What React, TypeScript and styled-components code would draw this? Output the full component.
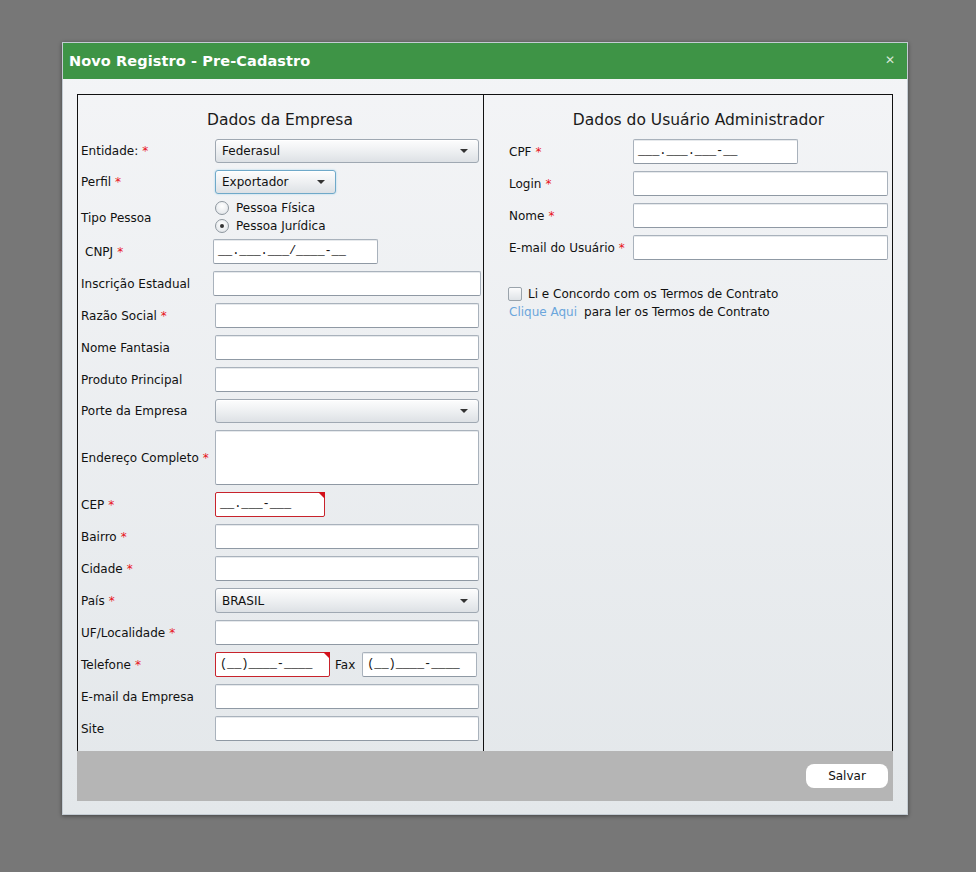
import React from "react";
import styled, { createGlobalStyle, css } from "styled-components";

const Global = createGlobalStyle`
  html, body { margin: 0; padding: 0; }
  body {
    background: #777777;
    font-family: "DejaVu Sans", Verdana, sans-serif;
    font-size: 12px;
    color: #111;
  }
`;

const Page = styled.div`
  width: 976px;
  height: 872px;
  padding: 42px 0 0 62px;
  box-sizing: border-box;
`;

const Dialog = styled.div`
  width: 846px;
  border: 1px solid #c4ccd3;
  box-sizing: border-box;
  box-shadow: 0 1px 4px rgba(0, 0, 0, 0.45);
  background: linear-gradient(#f4f5f7, #e3e7ea);
`;

const Header = styled.div`
  height: 36px;
  background: #3e9446;
  display: flex;
  align-items: center;
  justify-content: space-between;
  padding: 0 12px 0 6px;
`;

const Title = styled.div`
  color: #fff;
  font-weight: bold;
  font-size: 14.5px;
  letter-spacing: 0.1px;
`;

const Close = styled.div`
  color: #d8e6d8;
  font-size: 12px;
  line-height: 1;
  margin-top: -2px;
`;

const Body = styled.div`
  padding: 15px 14px 13px 14px;
`;

const Frame = styled.div`
  border: 1px solid #111;
  border-bottom: none;
  display: grid;
  grid-template-columns: 406px 1fr;
  height: 656px;
`;

const Column = styled.div<{ $divider?: boolean; $pl: number }>`
  padding: 0 4px 0 ${(p) => p.$pl}px;
  ${(p) =>
    p.$divider &&
    css`
      border-right: 1px solid #111;
    `}
`;

const SectionTitle = styled.div`
  font-size: 15.5px;
  text-align: center;
  height: 44px;
  line-height: 50px;
  color: #1a1a1a;
`;

const Rows = styled.div`
  display: flex;
  flex-direction: column;
  gap: 7px;
`;

const Row = styled.div<{ $h?: number; $label: number }>`
  display: grid;
  grid-template-columns: ${(p) => p.$label}px 1fr;
  align-items: center;
  height: ${(p) => p.$h ?? 25}px;
`;

const Label = styled.div<{ $indent?: number }>`
  padding-left: ${(p) => p.$indent ?? 0}px;
  white-space: nowrap;
`;

const Req = styled.span`
  color: #e8121a;
  margin-left: 4px;
`;

const fieldBase = css`
  box-sizing: border-box;
  height: 25px;
  background: #fff;
  border: 1px solid #a9b2bc;
  border-bottom-color: #8f99a4;
  border-radius: 2px;
  box-shadow: inset 0 1px 0 #e6e9ec;
  font-family: inherit;
  font-size: 12px;
  color: #111;
`;

const Input = styled.div<{ $w?: number; $invalid?: boolean }>`
  ${fieldBase}
  width: ${(p) => (p.$w ? `${p.$w}px` : "100%")};
  position: relative;
  display: flex;
  align-items: center;
  padding-left: 4px;
  ${(p) =>
    p.$invalid &&
    css`
      border-color: #c8232c;
      box-shadow: none;
      &::after {
        content: "";
        position: absolute;
        top: -1px;
        right: -1px;
        border-style: solid;
        border-width: 0 7px 7px 0;
        border-color: transparent #d3101a transparent transparent;
      }
    `}
`;

const Mask = styled.span`
  font-family: "Liberation Mono", "DejaVu Sans Mono", monospace;
  font-size: 12px;
  letter-spacing: -0.1px;
  margin-top: -1px;
`;

const TextArea = styled.div`
  ${fieldBase}
  width: 100%;
  height: 55px;
`;

const Select = styled.div<{ $w?: number; $h?: number; $focus?: boolean }>`
  box-sizing: border-box;
  width: ${(p) => (p.$w ? `${p.$w}px` : "100%")};
  height: ${(p) => p.$h ?? 24}px;
  border: 1px solid #9fa8b2;
  border-radius: 3px;
  background: linear-gradient(#fdfdfd 0%, #eef0f2 50%, #dde1e5 100%);
  box-shadow: inset 0 1px 0 #fff;
  display: flex;
  align-items: center;
  justify-content: space-between;
  padding: 0 10px 0 6px;
  font-size: 12px;
  color: #111;
  ${(p) =>
    p.$focus &&
    css`
      border-color: #6fa9c9;
      box-shadow: 0 0 2px #9fd0ea, inset 0 1px 0 #fff;
    `}
`;

const Arrow = styled.span`
  width: 0;
  height: 0;
  border-left: 4px solid transparent;
  border-right: 4px solid transparent;
  border-top: 4px solid #333;
`;

const Radios = styled.div`
  display: flex;
  flex-direction: column;
  margin-top: -2px;
`;

const RadioLine = styled.div`
  display: flex;
  align-items: center;
  gap: 7px;
  height: 18px;
`;

const RadioDot = styled.span<{ $checked?: boolean }>`
  box-sizing: border-box;
  width: 14px;
  height: 14px;
  border-radius: 50%;
  border: 1px solid #8e979f;
  background: radial-gradient(circle at 50% 35%, #ffffff 0%, #e7eaed 70%, #d6dadf 100%);
  display: flex;
  align-items: center;
  justify-content: center;
  &::after {
    content: "";
    width: 4px;
    height: 4px;
    border-radius: 50%;
    background: ${(p) => (p.$checked ? "#333" : "transparent")};
  }
`;

const PhoneGroup = styled.div`
  display: flex;
  align-items: center;
`;

const FaxLabel = styled.span`
  margin: 0 7px 0 5px;
`;

const Agree = styled.div`
  margin-top: 27px;
  margin-left: -1px;
  display: flex;
  flex-direction: column;
  gap: 4px;
`;

const AgreeLine = styled.div`
  display: flex;
  align-items: center;
  gap: 6px;
  height: 14px;
`;

const Check = styled.span`
  box-sizing: border-box;
  width: 14px;
  height: 14px;
  border: 1px solid #9aa3ab;
  border-radius: 2px;
  background: linear-gradient(#fbfbfc, #dfe3e7);
`;

const LinkLine = styled.div`
  padding-left: 1px;
  height: 14px;
  display: flex;
  align-items: center;
`;

const Link = styled.span`
  color: #6ba6dc;
  margin-right: 7px;
`;

const Footer = styled.div`
  height: 50px;
  background: #b5b5b5;
  display: flex;
  align-items: center;
  justify-content: flex-end;
  padding-right: 5px;
`;

const Button = styled.div`
  width: 82px;
  height: 24px;
  background: #fff;
  border-radius: 8px;
  display: flex;
  align-items: center;
  justify-content: center;
  font-size: 12px;
  color: #111;
`;

const L = 134;
const R = 124;

function Lbl({ text, req, indent }: { text: string; req?: boolean; indent?: number }) {
  return (
    <Label $indent={indent}>
      {text}
      {req && <Req>*</Req>}
    </Label>
  );
}

export default function App() {
  return (
    <>
      <Global />
      <Page>
        <Dialog>
          <Header>
            <Title>Novo Registro - Pre-Cadastro</Title>
            <Close>✕</Close>
          </Header>
          <Body>
            <Frame>
              <Column $divider $pl={3}>
                <SectionTitle>Dados da Empresa</SectionTitle>
                <Rows>
                  <Row $label={L} $h={24}>
                    <Lbl text="Entidade:" req />
                    <Select>
                      Federasul
                      <Arrow />
                    </Select>
                  </Row>
                  <Row $label={L} $h={24}>
                    <Lbl text="Perfil" req />
                    <Select $w={121} $focus>
                      Exportador
                      <Arrow />
                    </Select>
                  </Row>
                  <Row $label={L} $h={31}>
                    <Lbl text="Tipo Pessoa" />
                    <Radios>
                      <RadioLine>
                        <RadioDot />
                        Pessoa Física
                      </RadioLine>
                      <RadioLine>
                        <RadioDot $checked />
                        Pessoa Jurídica
                      </RadioLine>
                    </Radios>
                  </Row>
                  <Row $label={L - 2}>
                    <Lbl text="CNPJ" req indent={4} />
                    <Input $w={165}>
                      <Mask>__.___.___/____-__</Mask>
                    </Input>
                  </Row>
                  <Row $label={L - 2}>
                    <Lbl text="Inscrição Estadual" />
                    <Input $w={268} />
                  </Row>
                  <Row $label={L}>
                    <Lbl text="Razão Social" req />
                    <Input />
                  </Row>
                  <Row $label={L}>
                    <Lbl text="Nome Fantasia" />
                    <Input />
                  </Row>
                  <Row $label={L}>
                    <Lbl text="Produto Principal" />
                    <Input />
                  </Row>
                  <Row $label={L} $h={24}>
                    <Lbl text="Porte da Empresa" />
                    <Select>
                      <span />
                      <Arrow />
                    </Select>
                  </Row>
                  <Row $label={L} $h={55}>
                    <Lbl text="Endereço Completo" req />
                    <TextArea />
                  </Row>
                  <Row $label={L}>
                    <Lbl text="CEP" req />
                    <Input $w={110} $invalid>
                      <Mask>__.___-___</Mask>
                    </Input>
                  </Row>
                  <Row $label={L}>
                    <Lbl text="Bairro" req />
                    <Input />
                  </Row>
                  <Row $label={L}>
                    <Lbl text="Cidade" req />
                    <Input />
                  </Row>
                  <Row $label={L} $h={25}>
                    <Lbl text="País" req />
                    <Select $h={25}>
                      BRASIL
                      <Arrow />
                    </Select>
                  </Row>
                  <Row $label={L}>
                    <Lbl text="UF/Localidade" req />
                    <Input />
                  </Row>
                  <Row $label={L}>
                    <Lbl text="Telefone" req />
                    <PhoneGroup>
                      <Input $w={115} $invalid>
                        <Mask>(__)____-____</Mask>
                      </Input>
                      <FaxLabel>Fax</FaxLabel>
                      <Input $w={115}>
                        <Mask>(__)____-____</Mask>
                      </Input>
                    </PhoneGroup>
                  </Row>
                  <Row $label={L}>
                    <Lbl text="E-mail da Empresa" />
                    <Input />
                  </Row>
                  <Row $label={L}>
                    <Lbl text="Site" />
                    <Input />
                  </Row>
                </Rows>
              </Column>
              <Column $pl={25}>
                <SectionTitle>Dados do Usuário Administrador</SectionTitle>
                <Rows>
                  <Row $label={R}>
                    <Lbl text="CPF" req />
                    <Input $w={165}>
                      <Mask>___.___.___-__</Mask>
                    </Input>
                  </Row>
                  <Row $label={R}>
                    <Lbl text="Login" req />
                    <Input />
                  </Row>
                  <Row $label={R}>
                    <Lbl text="Nome" req />
                    <Input />
                  </Row>
                  <Row $label={R}>
                    <Lbl text="E-mail do Usuário" req />
                    <Input />
                  </Row>
                </Rows>
                <Agree>
                  <AgreeLine>
                    <Check />
                    Li e Concordo com os Termos de Contrato
                  </AgreeLine>
                  <LinkLine>
                    <Link>Clique Aqui</Link>
                    para ler os Termos de Contrato
                  </LinkLine>
                </Agree>
              </Column>
            </Frame>
            <Footer>
              <Button>Salvar</Button>
            </Footer>
          </Body>
        </Dialog>
      </Page>
    </>
  );
}
